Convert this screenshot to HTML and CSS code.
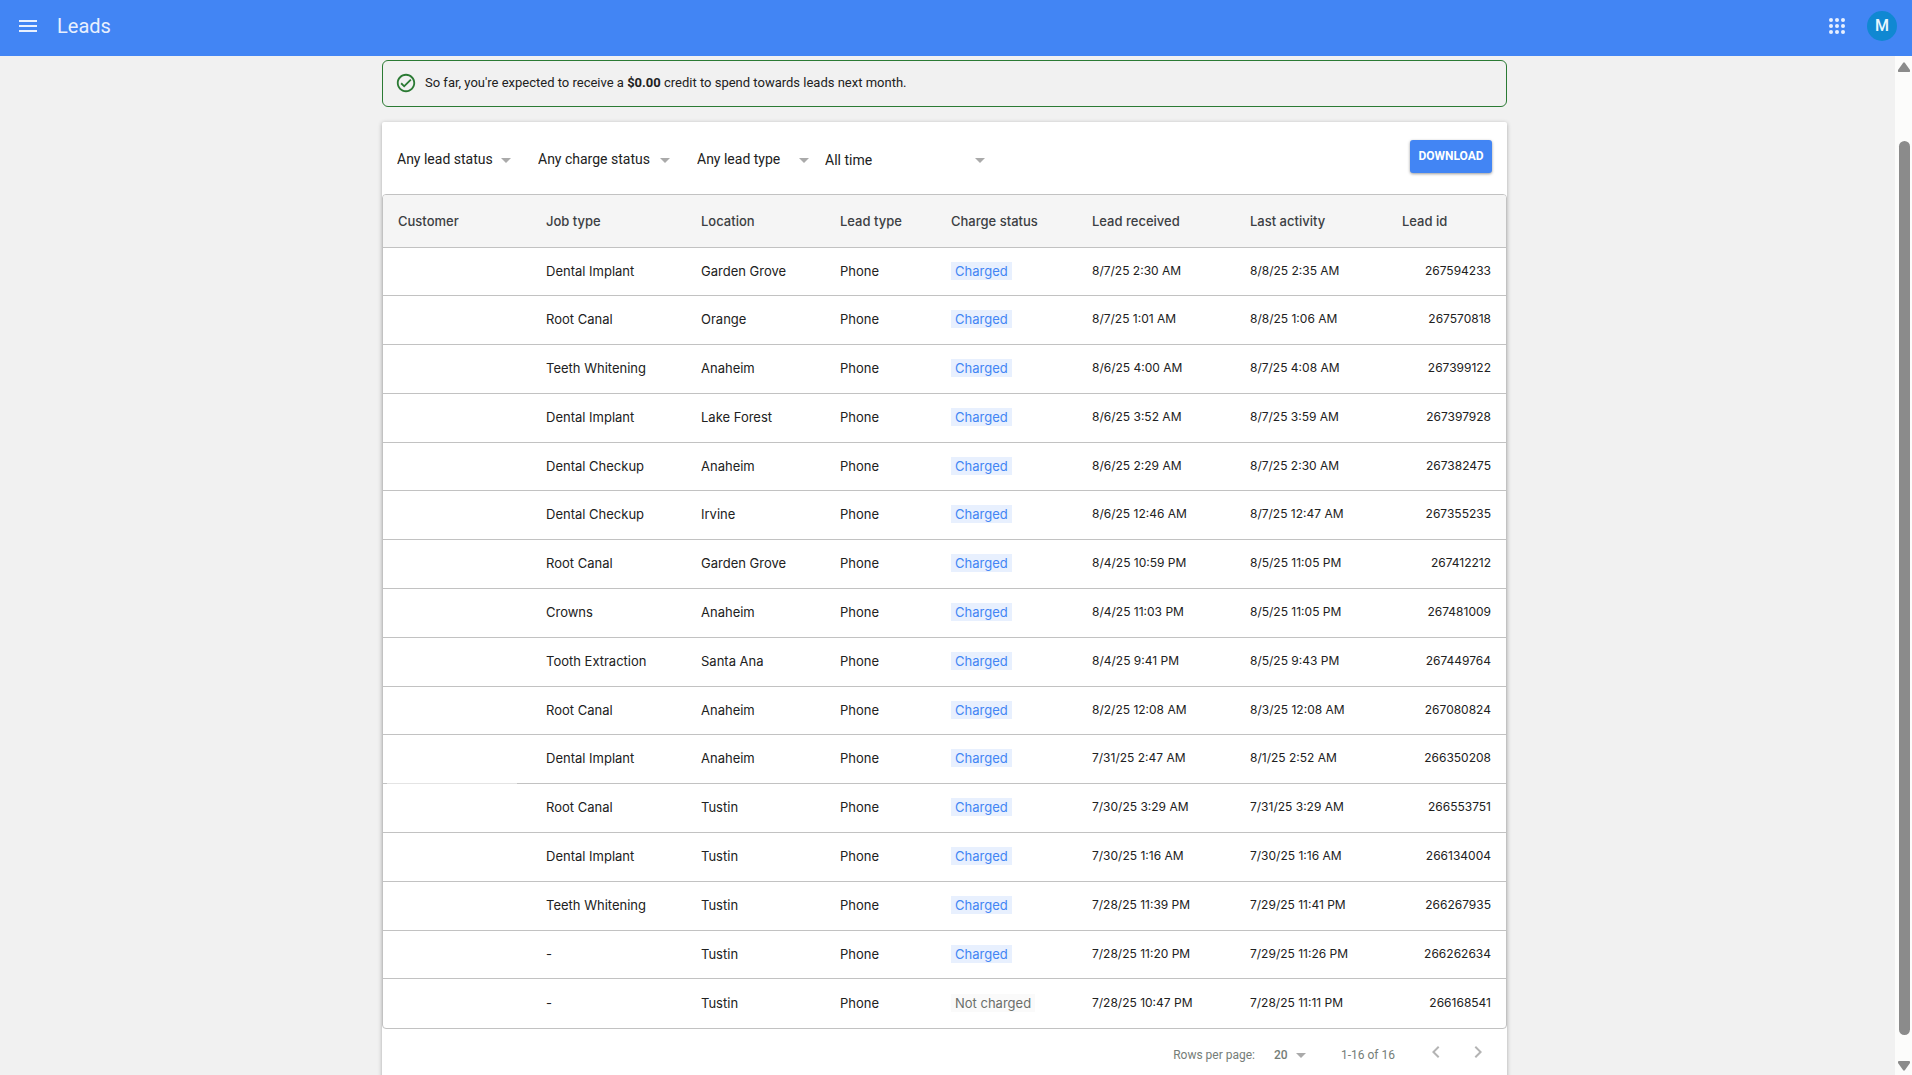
FILE: index.html
```html
<!DOCTYPE html>
<html lang="en">
<head>
<meta charset="utf-8">
<title>Leads</title>
<meta name="viewport" content="width=device-width, initial-scale=1">
<link rel="stylesheet" href="styles.css">
</head>
<body>
<header class="app-bar">
  <button class="icon-button" type="button" aria-label="Main menu">
    <svg width="24" height="24" viewBox="0 0 24 24" fill="currentColor"><path d="M3 18h18v-2H3v2zm0-5h18v-2H3v2zm0-7v2h18V6H3z"/></svg>
  </button>
  <h1 class="app-title">Leads</h1>
  <button class="icon-button" type="button" aria-label="Apps">
    <svg width="24" height="24" viewBox="0 0 24 24" fill="currentColor"><circle cx="6" cy="6" r="2"/><circle cx="12" cy="6" r="2"/><circle cx="18" cy="6" r="2"/><circle cx="6" cy="12" r="2"/><circle cx="12" cy="12" r="2"/><circle cx="18" cy="12" r="2"/><circle cx="6" cy="18" r="2"/><circle cx="12" cy="18" r="2"/><circle cx="18" cy="18" r="2"/></svg>
  </button>
  <button class="avatar" type="button" aria-label="Account">M</button>
</header>
<div class="viewport">
  <main class="content">
    <p class="banner">
      <svg width="22" height="22" viewBox="0 0 24 24" fill="#2b7a34"><path d="M12 2C6.480 2 2 6.480 2 12s4.480 10 10 10 10-4.480 10-10S17.520 2 12 2zm0 18c-4.410 0-8-3.590-8-8s3.590-8 8-8 8 3.590 8 8-3.590 8-8 8zm4.590-12.420L10 14.170l-2.590-2.580L6 13l4 4 8-8-1.410-1.420z"/></svg>
      <span>So far, you're expected to receive a <b>$0.00</b> credit to spend towards leads next month.</span>
    </p>
    <section class="card">
      <div class="toolbar">
        <select class="filter filter-status" aria-label="Lead status"><option>Any lead status</option></select>
        <select class="filter filter-charge" aria-label="Charge status"><option>Any charge status</option></select>
        <select class="filter filter-type" aria-label="Lead type"><option>Any lead type</option></select>
        <select class="filter filter-time" aria-label="Time range"><option>All time</option></select>
        <button class="download" type="button">DOWNLOAD</button>
      </div>
      <div class="table-frame">
        <table class="leads">
          <colgroup><col class="c-customer"><col class="c-job"><col class="c-location"><col class="c-type"><col class="c-charge"><col class="c-received"><col class="c-activity"><col class="c-id"></colgroup>
          <thead>
            <tr><th>Customer</th><th>Job type</th><th>Location</th><th>Lead type</th><th>Charge status</th><th>Lead received</th><th>Last activity</th><th>Lead id</th></tr>
          </thead>
          <tbody>
            <tr><td></td><td>Dental Implant</td><td>Garden Grove</td><td>Phone</td><td><span class="tag">Charged</span></td><td>8/7/25 2:30 AM</td><td>8/8/25 2:35 AM</td><td>267594233</td></tr>
            <tr><td></td><td>Root Canal</td><td>Orange</td><td>Phone</td><td><span class="tag">Charged</span></td><td>8/7/25 1:01 AM</td><td>8/8/25 1:06 AM</td><td>267570818</td></tr>
            <tr><td></td><td>Teeth Whitening</td><td>Anaheim</td><td>Phone</td><td><span class="tag">Charged</span></td><td>8/6/25 4:00 AM</td><td>8/7/25 4:08 AM</td><td>267399122</td></tr>
            <tr><td></td><td>Dental Implant</td><td>Lake Forest</td><td>Phone</td><td><span class="tag">Charged</span></td><td>8/6/25 3:52 AM</td><td>8/7/25 3:59 AM</td><td>267397928</td></tr>
            <tr><td></td><td>Dental Checkup</td><td>Anaheim</td><td>Phone</td><td><span class="tag">Charged</span></td><td>8/6/25 2:29 AM</td><td>8/7/25 2:30 AM</td><td>267382475</td></tr>
            <tr><td></td><td>Dental Checkup</td><td>Irvine</td><td>Phone</td><td><span class="tag">Charged</span></td><td>8/6/25 12:46 AM</td><td>8/7/25 12:47 AM</td><td>267355235</td></tr>
            <tr><td></td><td>Root Canal</td><td>Garden Grove</td><td>Phone</td><td><span class="tag">Charged</span></td><td>8/4/25 10:59 PM</td><td>8/5/25 11:05 PM</td><td>267412212</td></tr>
            <tr><td></td><td>Crowns</td><td>Anaheim</td><td>Phone</td><td><span class="tag">Charged</span></td><td>8/4/25 11:03 PM</td><td>8/5/25 11:05 PM</td><td>267481009</td></tr>
            <tr><td></td><td>Tooth Extraction</td><td>Santa Ana</td><td>Phone</td><td><span class="tag">Charged</span></td><td>8/4/25 9:41 PM</td><td>8/5/25 9:43 PM</td><td>267449764</td></tr>
            <tr><td></td><td>Root Canal</td><td>Anaheim</td><td>Phone</td><td><span class="tag">Charged</span></td><td>8/2/25 12:08 AM</td><td>8/3/25 12:08 AM</td><td>267080824</td></tr>
            <tr><td class="faint"></td><td>Dental Implant</td><td>Anaheim</td><td>Phone</td><td><span class="tag">Charged</span></td><td>7/31/25 2:47 AM</td><td>8/1/25 2:52 AM</td><td>266350208</td></tr>
            <tr><td></td><td>Root Canal</td><td>Tustin</td><td>Phone</td><td><span class="tag">Charged</span></td><td>7/30/25 3:29 AM</td><td>7/31/25 3:29 AM</td><td>266553751</td></tr>
            <tr><td></td><td>Dental Implant</td><td>Tustin</td><td>Phone</td><td><span class="tag">Charged</span></td><td>7/30/25 1:16 AM</td><td>7/30/25 1:16 AM</td><td>266134004</td></tr>
            <tr><td></td><td>Teeth Whitening</td><td>Tustin</td><td>Phone</td><td><span class="tag">Charged</span></td><td>7/28/25 11:39 PM</td><td>7/29/25 11:41 PM</td><td>266267935</td></tr>
            <tr><td></td><td>-</td><td>Tustin</td><td>Phone</td><td><span class="tag">Charged</span></td><td>7/28/25 11:20 PM</td><td>7/29/25 11:26 PM</td><td>266262634</td></tr>
            <tr><td></td><td>-</td><td>Tustin</td><td>Phone</td><td><span class="tag tag-muted">Not charged</span></td><td>7/28/25 10:47 PM</td><td>7/28/25 11:11 PM</td><td>266168541</td></tr>
          </tbody>
        </table>
      </div>
      <div class="pager">
        <label for="rows">Rows per page:</label>
        <select class="filter pager-rows" id="rows"><option>20</option></select>
        <span class="pager-range">1-16 of 16</span>
        <button class="pager-button" type="button" aria-label="Previous page"><svg width="24" height="24" viewBox="0 0 24 24" fill="currentColor"><path d="M15.410 7.410 14 6l-6 6 6 6 1.410-1.410L10.830 12z"/></svg></button>
        <button class="pager-button" type="button" aria-label="Next page"><svg width="24" height="24" viewBox="0 0 24 24" fill="currentColor"><path d="M10 6 8.590 7.410 13.170 12l-4.580 4.590L10 18l6-6z"/></svg></button>
      </div>
    </section>
  </main>
  <div class="scrollbar" aria-hidden="true">
    <svg width="12" height="10" viewBox="0 0 12 10" fill="#8b8b8b"><path d="M5 1q1-1.500 2 0l5 7q.5 2-1 2H1Q-.5 10 0 8z"/></svg>
    <div class="track"><div class="thumb"></div></div>
    <svg width="12" height="10" viewBox="0 0 12 10" fill="#8b8b8b"><path d="M5 9q1 1.500 2 0l5-7q.5-2-1-2H1Q-.5 0 0 2z"/></svg>
  </div>
</div>
</body>
</html>
```
FILE: styles.css
```css
* { box-sizing: border-box; }

body {
  margin: 0;
  height: 100vh;
  display: flex;
  flex-direction: column;
  overflow: hidden;
  background: #f1f1f1;
  color: #212121;
  font: 13px/20px Roboto, sans-serif;
}

button, select { font: inherit; border: 0; }
svg { display: block; flex: none; }

.app-bar {
  flex: none;
  height: 56px;
  display: flex;
  align-items: center;
  padding: 0 15px 4px 16px;
  background: #4285f4;
  color: #e8f0fe;
}
.icon-button { padding: 0; background: none; color: inherit; }
.app-title {
  flex: 1;
  margin: 0 0 0 17px;
  font: 400 20px/28px Roboto, sans-serif;
}
.avatar {
  width: 30px;
  height: 30px;
  margin-left: 18px;
  padding: 0;
  border-radius: 50%;
  background: #1088d2;
  color: #e8f7ff;
  font-size: 16px;
  font-weight: 500;
}

.viewport { flex: 1; min-height: 0; display: flex; }

.content {
  flex: 1;
  min-width: 0;
  overflow: hidden;
  padding: 4px 6px 0 0;
}
.banner {
  display: flex;
  gap: 8px;
  max-width: 1125px;
  height: 47px;
  margin: 0 auto 15px;
  padding: 11px 12px;
  border: 1px solid #2b7a34;
  border-radius: 6px;
  line-height: 22px;
}
.card {
  max-width: 1125px;
  margin: 0 auto;
  background: #fff;
  border-radius: 2px;
  box-shadow: 0 1px 4px rgba(0, 0, 0, .3);
}

.toolbar { display: flex; padding: 18px 15px 14px; }
.filter {
  appearance: none;
  height: 40px;
  padding: 0 0 2px;
  color: inherit;
  background: url("data:image/svg+xml,%3Csvg xmlns='http://www.w3.org/2000/svg' width='10' height='5'%3E%3Cpath d='M0 0h10L5 5z' fill='%23aaa'/%3E%3C/svg%3E") right 18px no-repeat;
  font-size: 14px;
}
.filter-status { width: 114px; margin-right: 27px; }
.filter-charge { width: 132px; margin-right: 27px; }
.filter-type { width: 112px; margin-right: 16px; }
.filter-time { width: 160px; padding: 0; }
.download {
  width: 82px;
  height: 33px;
  margin-left: auto;
  padding: 0 0 2px;
  border-radius: 3px;
  background: #4285f4;
  color: #fff;
  font-size: 12px;
  font-weight: 700;
  box-shadow: 0 1px 3px rgba(0, 0, 0, .4);
}

.table-frame {
  border: 1px solid #c2c2c2;
  border-radius: 4px;
  overflow: hidden;
}
.leads {
  width: 100%;
  table-layout: fixed;
  border-collapse: separate;
  border-spacing: 0;
  font: 13px/18px Inter, sans-serif;
}
.c-customer { width: 148px; }
.c-job { width: 155px; }
.c-location { width: 139px; }
.c-type { width: 111px; }
.c-charge { width: 141px; }
.c-received { width: 158px; }
.c-activity { width: 152px; }
.c-id { width: 119px; }
.leads th, .leads td {
  padding: 0 15px;
  text-align: left;
  white-space: nowrap;
  border-bottom: 1px solid #c2c2c2;
}
.leads th {
  height: 53px;
  background: #f5f5f5;
  color: #3c4043;
  font-weight: 500;
}
.leads td { height: 49px; padding-bottom: 2px; }
.leads tr:first-child td, .leads tr:nth-child(5n) td { height: 48px; }
.leads td:nth-child(n+6) { font-size: 12px; }
.leads td:last-child { text-align: right; }
.leads tr:last-child td { border-bottom: 0; }
.leads td.faint {
  border-bottom: 0;
  background: linear-gradient(90deg, #c2c2c2 4px, #e4e4e4 4px 134px, #c2c2c2 134px) bottom / 100% 1px no-repeat;
}
.tag {
  display: inline-block;
  padding: 0 4px;
  background: #e8f0fe;
  color: #4285f4;
}
.tag-muted { background: #fafafa; color: #6b6f6b; }

.pager {
  display: flex;
  align-items: center;
  justify-content: flex-end;
  height: 52px;
  padding-right: 17px;
  color: #757d78;
  font-size: 12px;
}
.pager-rows { width: 32px; margin: 0 35px 0 19px; padding: 0; font-size: 12px; font-weight: 500; }
.pager-range { margin-right: 29px; }
.pager-button { width: 24px; margin-bottom: 6px; padding: 0; background: none; color: #b4b4b4; }
.pager-button + .pager-button { margin-left: 18px; }

.scrollbar {
  width: 17px;
  display: flex;
  flex-direction: column;
  align-items: center;
  gap: 2px;
  padding: 6px 0 4px 1px;
  background: #fcfcfb;
}
.track { flex: 1; padding: 67px 0 24px; }
.thumb { width: 11px; height: 100%; border-radius: 6px; background: #8b8b8b; }
```
